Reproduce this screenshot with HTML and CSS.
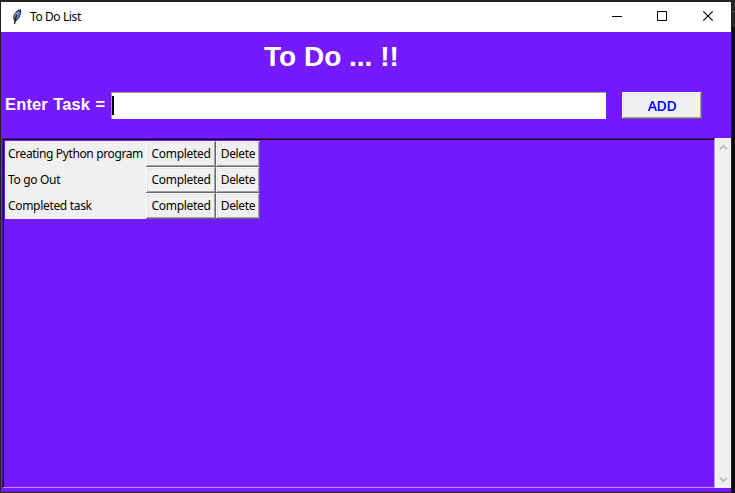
FILE: index.html
```html
<!DOCTYPE html>
<html lang="en">
<head>
<meta charset="utf-8">
<title>To Do List</title>
<link rel="stylesheet" href="styles.css">
</head>
<body>
<main class="window">
  <header class="titlebar">
    <svg class="feather" width="10" height="16" viewBox="0 0 10 16">
      <path d="M8.500 .5 5 2 2.300 5.500 1.500 9.500 3 12l2-1 2.400-3L8.800 3z" fill="#5b8ecb" stroke="#222b38" stroke-width="1"/>
      <path d="M7.500 2 4 8 2.500 15" fill="none" stroke="#101010" stroke-width="1.200"/>
      <path d="M7 3 5 6" stroke="#b9dcff" stroke-width="1"/>
    </svg>
    <span class="caption">To Do List</span>
    <svg class="controls" width="138" height="30" viewBox="0 0 138 30" fill="none" stroke="#000" stroke-width="1">
      <path d="M19 14.500h10M64.500 9.500h9v9h-9z"/>
      <path d="M110.300 9.300l9.400 9.400M119.700 9.300l-9.400 9.400" stroke-width="1.200"/>
    </svg>
  </header>
  <h1 class="heading">To Do ... !!</h1>
  <div class="entry-row">
    <label class="entry-label">Enter Task =</label>
    <div class="entry"><span class="caret"></span></div>
    <button class="btn add">ADD</button>
  </div>
  <div class="list-row">
    <div class="canvas">
      <div class="tasks">
        <span class="task wide">Creating Python program</span><button class="btn">Completed</button><button class="btn">Delete</button>
        <span class="task">To go Out</span><button class="btn">Completed</button><button class="btn">Delete</button>
        <span class="task">Completed task</span><button class="btn">Completed</button><button class="btn">Delete</button>
      </div>
    </div>
    <div class="scrollbar">
      <svg width="9" height="7" viewBox="0 0 9 7"><path d="M1 5.300 4.500 1.800 8 5.300" fill="none" stroke="#bfbfbf" stroke-width="2"/></svg>
      <svg width="9" height="7" viewBox="0 0 9 7"><path d="M1 1.700 4.500 5.200 8 1.700" fill="none" stroke="#bfbfbf" stroke-width="2"/></svg>
    </div>
  </div>
</main>
<aside class="backdrop"></aside>
</body>
</html>
```
FILE: styles.css
```css
* { box-sizing: border-box; }
body {
  margin: 0;
  width: 735px;
  height: 493px;
  padding: 2px 0 1px 1px;
  display: flex;
  overflow: hidden;
  background: #232323;
  font-family: "Noto Sans", sans-serif;
  font-size: 12px;
  color: #000;
}
.window {
  width: 730px;
  height: 490px;
  background: #751aff;
  display: flex;
  flex-direction: column;
}
.backdrop {
  width: 4px;
  height: 491px;
  border-left: 1px solid #222;
  background: linear-gradient(#262626 9px, #555 9px 10px, #262626 10px 25px, #0c0c0c 25px);
}
.titlebar {
  height: 30px;
  background: #fff;
  display: flex;
  align-items: center;
  padding-left: 11px;
}
.caption {
  margin-left: 8px;
  font-size: 12px;
  letter-spacing: -0.400px;
  line-height: 30px;
}
.controls { margin-left: auto; }
.heading {
  margin: 0;
  padding: 8px 0 0 263px;
  height: 60px;
  font: bold 28px/33px "Liberation Sans", sans-serif;
  color: #fff;
  white-space: nowrap;
}
.entry-row {
  height: 46px;
  display: flex;
  align-items: flex-start;
  padding-left: 4px;
}
.entry-label {
  width: 106px;
  font: bold 16.500px/25px "Liberation Sans", sans-serif;
  letter-spacing: 0.150px;
  word-spacing: 0.500px;
  color: #fff;
  white-space: nowrap;
}
.entry {
  width: 495px;
  height: 27px;
  background: #fff;
  border-top: 1px solid #a0a0a0;
  border-left: 1px solid #a0a0a0;
  padding: 3px 0 0;
}
.caret {
  display: block;
  width: 2px;
  height: 19px;
  background: #000;
}
.btn {
  margin: 0;
  padding: 0;
  border: 0;
  background: #f0f0f0;
  font: 12px/24px "Noto Sans", sans-serif;
  letter-spacing: -0.320px;
  color: #000;
  height: 26px;
  white-space: nowrap;
  box-shadow: inset -1px -1px #696969, inset 1px 1px #fff, inset -2px -2px #a0a0a0, inset 2px 2px #e3e3e3;
}
.add {
  width: 80px;
  height: 27px;
  margin-left: 16px;
  font: 600 14px/25px "Open Sans", sans-serif;
  letter-spacing: -0.400px;
  color: #0000ff;
}
.list-row {
  display: flex;
  height: 350px;
  padding-left: 1px;
}
.canvas {
  width: 713px;
  height: 350px;
  padding: 3px 0 0 3px;
  box-shadow: inset 1px 1px #471099, inset -1px -1px #bd91ff, inset 2px 2px #07001a;
}
.tasks {
  width: 255px;
  display: grid;
  grid-template-columns: 141px 70px 44px;
  grid-auto-rows: 26px;
  background: #f0f0f0;
}
.task {
  padding-left: 3px;
  line-height: 25px;
  letter-spacing: -0.320px;
  white-space: nowrap;
}
.wide { letter-spacing: -0.370px; }
.scrollbar {
  width: 16px;
  height: 350px;
  background: #f0f0f0;
  border-left: 1px solid #fff;
  display: flex;
  flex-direction: column;
  justify-content: space-between;
  align-items: center;
  padding: 6px 0 5px;
}
```
